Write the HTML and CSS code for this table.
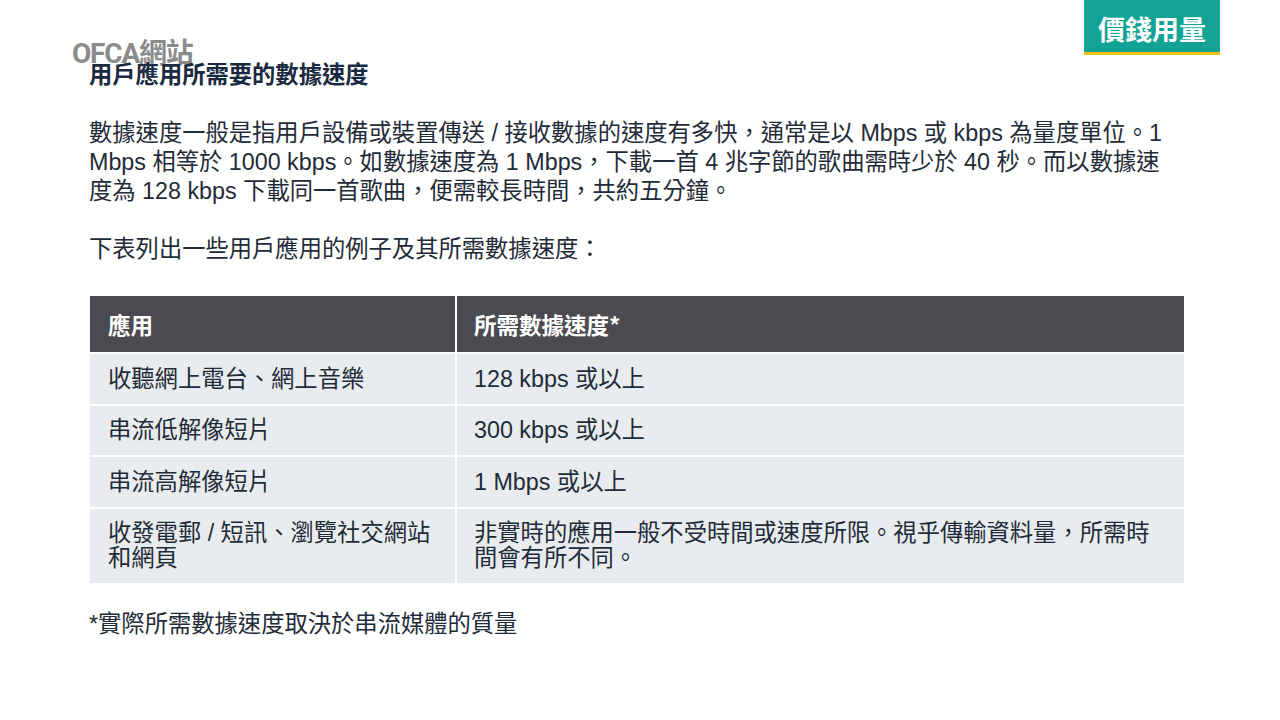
FILE: index.html
```html
<!DOCTYPE html>
<html lang="zh-Hant">
<head>
<meta charset="utf-8">
<title>用戶應用所需要的數據速度</title>
<link rel="stylesheet" href="styles.css">
</head>
<body>
<div class="page">
  <div class="site-label">OFCA網站</div>
  <div class="badge">價錢用量</div>
  <main class="content">
    <h1 class="title">用戶應用所需要的數據速度</h1>
    <p class="para">數據速度一般是指用戶設備或裝置傳送 / 接收數據的速度有多快，通常是以 Mbps 或 kbps 為量度單位。1 Mbps 相等於 1000 kbps。如數據速度為 1 Mbps，下載一首 4 兆字節的歌曲需時少於 40 秒。而以數據速度為 128 kbps 下載同一首歌曲，便需較長時間，共約五分鐘。</p>
    <p class="para">下表列出一些用戶應用的例子及其所需數據速度：</p>
    <table class="speed-table">
      <thead>
        <tr><th class="col-app">應用</th><th>所需數據速度*</th></tr>
      </thead>
      <tbody>
        <tr><td>收聽網上電台、網上音樂</td><td>128 kbps 或以上</td></tr>
        <tr><td>串流低解像短片</td><td>300 kbps 或以上</td></tr>
        <tr><td>串流高解像短片</td><td>1 Mbps 或以上</td></tr>
        <tr><td>收發電郵 / 短訊、瀏覽社交網站和網頁</td><td>非實時的應用一般不受時間或速度所限。視乎傳輸資料量，所需時間會有所不同。</td></tr>
      </tbody>
    </table>
    <p class="note">*實際所需數據速度取決於串流媒體的質量</p>
  </main>
</div>
</body>
</html>
```
FILE: styles.css
```css
html, body {
  margin: 0;
  padding: 0;
  background: #ffffff;
}
body {
  font-family: "Liberation Sans", "Noto Sans CJK TC", sans-serif;
  color: #1f2b38;
}
.page {
  position: relative;
  width: 1280px;
  height: 720px;
  overflow: hidden;
}
.site-label {
  position: absolute;
  left: 72px;
  top: 37px;
  font-family: "Roboto", "Noto Sans CJK TC", sans-serif;
  font-weight: 700;
  font-size: 28px;
  line-height: 34px;
  letter-spacing: -1.2px;
  color: #8b8b8b;
}
.badge {
  position: absolute;
  left: 1084px;
  top: 0;
  width: 136px;
  height: 52px;
  background: #13a394;
  border-bottom: 3px solid #f0c419;
  color: #ffffff;
  font-family: "Noto Sans CJK TC", sans-serif;
  font-weight: 700;
  font-size: 27px;
  line-height: 58px;
  text-align: center;
}
.content {
  position: relative;
  padding: 61px 0 0 89px;
  width: 1095px;
  font-size: 23.3px;
  line-height: 29px;
}
.title {
  margin: 0 0 29px 0;
  font-size: 23.3px;
  line-height: 29px;
  font-weight: 700;
  color: #1a2a40;
}
.para {
  margin: 0 0 29px 0;
  width: 1090px;
}
.para + .para {
  margin-bottom: 32px;
}
.speed-table {
  margin-left: 1px;
  width: 1094px;
  border-collapse: collapse;
  font-size: 23.3px;
  line-height: 25px;
}
.speed-table th {
  background: #4b4a50;
  color: #ffffff;
  font-family: "Noto Sans CJK TC", sans-serif;
  font-weight: 700;
  text-align: left;
  padding: 15.5px 17px;
  font-size: 22.5px;
  border-left: 2px solid #ffffff;
}
.speed-table th:first-child,
.speed-table td:first-child {
  border-left: none;
  padding-left: 18px;
}
.speed-table .col-app {
  width: 330px;
}
.speed-table td {
  background: #e9ecee;
  padding: 12.5px 17px 12px 17px;
  vertical-align: top;
  border-top: 2px solid #ffffff;
  border-left: 2px solid #ffffff;
  color: #1f2b38;
}
.note {
  margin: 27px 0 0 0;
}
```
